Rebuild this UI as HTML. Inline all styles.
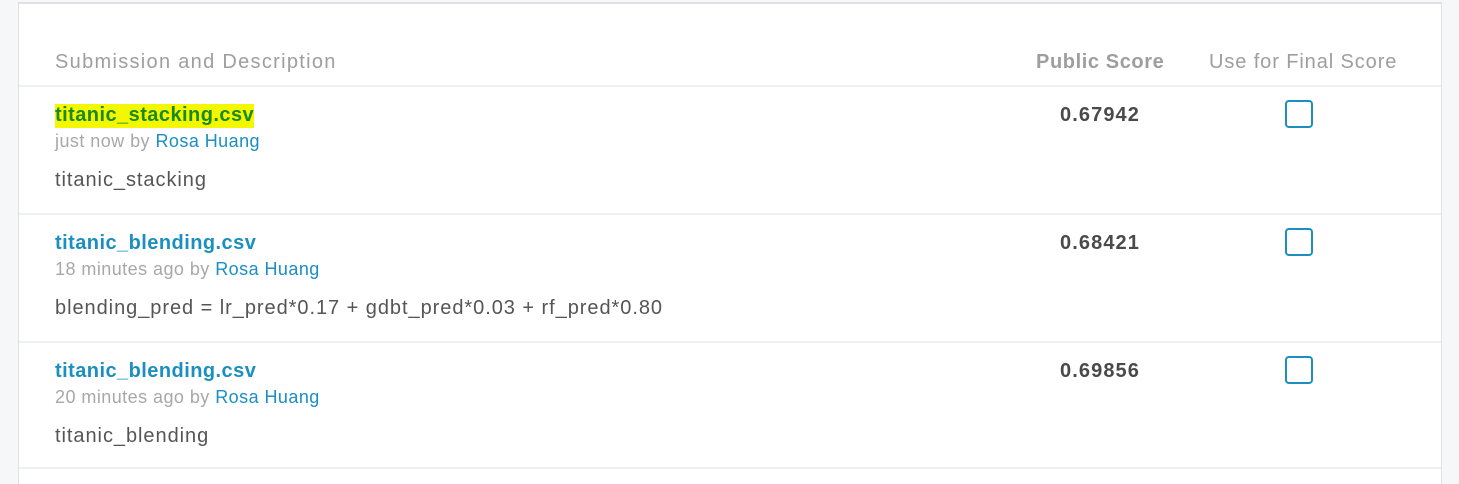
<!DOCTYPE html>
<html><head><meta charset="utf-8"><style>
body{margin:0;width:1459px;height:470px;background:#f5f7f8;font-family:"Liberation Sans",sans-serif;position:relative;overflow:hidden}
.panel{position:absolute;left:18px;top:2px;width:1422px;height:480px;background:#fff;border-left:1px solid #dde1e3;border-right:1px solid #dde1e3;border-top:2px solid #dde1e3}
.a{position:absolute;white-space:nowrap}
.h{font-size:20px;color:#9e9e9e;top:51px;letter-spacing:1.1px}
.line{position:absolute;left:19px;width:1422px;height:2px;background:#eef0f1}
.t{font-size:20px;font-weight:bold;color:#1a8fc0;letter-spacing:0.45px}
.m{font-size:18px;color:#a8a8a8;letter-spacing:0.45px}
.m span{color:#1a8fc0}
.d{font-size:20px;color:#555;letter-spacing:0.95px}
.s{font-size:20px;font-weight:bold;color:#4a4a4a;left:1060px;letter-spacing:1.1px}
.cb{position:absolute;left:1285px;width:24px;height:24px;border:2px solid #1a8fc0;border-radius:4px}
</style></head><body>
<div class="panel"></div>
<div class="a h" style="left:55px;letter-spacing:1.3px">Submission and Description</div>
<div class="a h" style="left:1036px;font-weight:bold;letter-spacing:0.6px">Public Score</div>
<div class="a h" style="left:1209px;letter-spacing:0.9px">Use for Final Score</div>
<div class="line" style="top:85px"></div>

<div class="a t" style="left:55px;top:104px;background:#f3f700;color:#1a8a1a;padding:0 0 1px">titanic_stacking.csv</div>
<div class="a m" style="left:55px;top:131px">just now by <span>Rosa Huang</span></div>
<div class="a d" style="left:55px;top:169px">titanic_stacking</div>
<div class="a s" style="top:104px">0.67942</div>
<div class="cb" style="top:100px"></div>
<div class="line" style="top:213px"></div>

<div class="a t" style="left:55px;top:232px">titanic_blending.csv</div>
<div class="a m" style="left:55px;top:259px">18 minutes ago by <span>Rosa Huang</span></div>
<div class="a d" style="left:55px;top:297px">blending_pred = lr_pred*0.17 + gdbt_pred*0.03 + rf_pred*0.80</div>
<div class="a s" style="top:232px">0.68421</div>
<div class="cb" style="top:228px"></div>
<div class="line" style="top:341px"></div>

<div class="a t" style="left:55px;top:360px">titanic_blending.csv</div>
<div class="a m" style="left:55px;top:387px">20 minutes ago by <span>Rosa Huang</span></div>
<div class="a d" style="left:55px;top:425px">titanic_blending</div>
<div class="a s" style="top:360px">0.69856</div>
<div class="cb" style="top:356px"></div>
<div class="line" style="top:467px"></div>
</body></html>
